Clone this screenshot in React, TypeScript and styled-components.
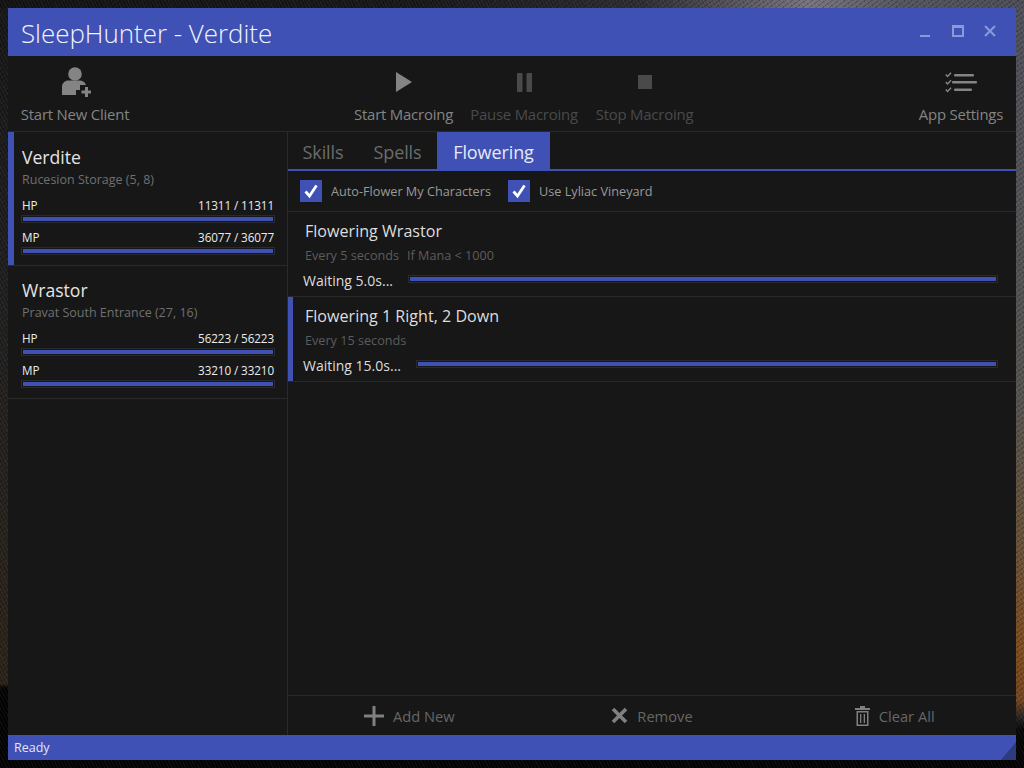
import React from "react";
import styled, { createGlobalStyle } from "styled-components";

const FONT = `"Open Sans", "Noto Sans", "Liberation Sans", sans-serif`;

const Global = createGlobalStyle`
  html, body { margin: 0; height: 100%; }
  body {
    background-color: #020202;
    background-image:
      repeating-linear-gradient(63deg, rgba(255,255,255,.05) 0 1px, transparent 1px 3px),
      repeating-linear-gradient(-37deg, rgba(0,0,0,.22) 0 1px, transparent 1px 4px),
      linear-gradient(90deg, #121212 0, #17171a 420px, #2c2c31 640px, #77747f 810px, #55555f 900px, #4c4c58 1024px),
      linear-gradient(180deg, #4f4f5a 0, #55534f 400px, #6a5034 560px, #7e4c1f 650px, #74461f 700px, #2c2623 716px, #060606 730px, #020202 768px),
      linear-gradient(180deg, #161616 0, #1f1f1f 300px, #2a2218 660px, #2a2218 684px, #020202 688px);
    background-size: 100% 100%, 100% 100%, 100% 8px, 8px 100%, 8px 100%;
    background-position: 0 0, 0 0, 0 0, right 0 top 0, 0 0;
    background-repeat: no-repeat;
    font-family: ${FONT};
    overflow: hidden;
  }
`;

const Desktop = styled.div`
  box-sizing: border-box;
  width: 1024px;
  height: 768px;
  padding: 8px;
`;

const Window = styled.div`
  height: 752px;
  display: flex;
  flex-direction: column;
  background: #171717;
`;

const TitleBar = styled.header`
  flex: 0 0 48px;
  display: flex;
  align-items: center;
  justify-content: space-between;
  background: #3f51b5;
`;

const Title = styled.h1`
  margin: 0 0 0 13px;
  padding-top: 2px;
  font-size: 25.9px;
  font-weight: 300;
  line-height: 46px;
  color: #f2f4fb;
`;

const WinControls = styled.div`
  display: flex;
  align-items: center;
  margin: 0 20px 2px 0;
  gap: 20px;
`;

const WinIcon = styled.svg`
  display: block;
  width: 12px;
  height: 12px;
  color: #8d98d9;
`;

const Toolbar = styled.nav`
  flex: 0 0 76px;
  box-sizing: border-box;
  display: flex;
  padding: 0 2px 0 4px;
  border-bottom: 1px solid #2a2a2a;
`;

const ToolButton = styled.div<{ $w: number; $dim?: boolean; $left?: string }>`
  flex: 0 0 ${(p) => p.$w}px;
  margin-left: ${(p) => p.$left ?? "0"};
  display: flex;
  flex-direction: column;
  align-items: center;
  color: ${(p) => (p.$dim ? "#4a4a4a" : "#848484")};
`;

const ToolIconBox = styled.div`
  height: 52px;
  display: flex;
  align-items: center;
  justify-content: center;
`;

const ToolLabel = styled.span`
  font-size: 14.9px;
  line-height: 20px;
  margin-top: -4px;
  white-space: nowrap;
  letter-spacing: -0.2px;
`;

const Main = styled.div`
  flex: 1;
  min-height: 0;
  display: flex;
`;

const Sidebar = styled.aside`
  flex: 0 0 280px;
  box-sizing: border-box;
  border-right: 1px solid #2a2a2a;
`;

const CharCard = styled.section<{ $selected?: boolean }>`
  box-sizing: border-box;
  height: ${(p) => (p.$selected ? 134 : 133)}px;
  padding: ${(p) => (p.$selected ? 13 : 12)}px 12px 0 14px;
  border-bottom: 1px solid #2a2a2a;
  box-shadow: ${(p) => (p.$selected ? "inset 6px 0 0 #3f51b5" : "none")};
`;

const CharName = styled.div`
  font-size: 17.6px;
  line-height: 24px;
  color: #e4e4e4;
`;

const CharPlace = styled.div`
  font-size: 12.5px;
  line-height: 18px;
  margin-top: 2px;
  color: #707070;
`;

const VitalStack = styled.div`
  display: flex;
  flex-direction: column;
  gap: 6px;
  margin: 8px 0 0 -1px;
`;

const VitalHead = styled.div`
  display: flex;
  justify-content: space-between;
  font-size: 11.7px;
  line-height: 16px;
  padding: 0 1px;
  color: #ececec;
  margin-bottom: 2px;
  letter-spacing: -0.1px;
`;

const Track = styled.div`
  box-sizing: border-box;
  height: 8px;
  padding: 1px;
  border: 1px solid #2a2a2a;
  background: #171717;
`;

const Fill = styled.div`
  height: 100%;
  background: #3f51b5;
`;

const Content = styled.main`
  flex: 1;
  min-width: 0;
  display: flex;
  flex-direction: column;
`;

const TabBar = styled.div`
  flex: 0 0 39px;
  box-sizing: border-box;
  display: flex;
  border-bottom: 2px solid #3f51b5;
`;

const Tab = styled.div<{ $active?: boolean; $w: number }>`
  flex: 0 0 ${(p) => p.$w}px;
  box-sizing: border-box;
  padding-top: 3px;
  text-align: center;
  font-size: 18px;
  line-height: 34px;
  letter-spacing: -0.1px;
  color: ${(p) => (p.$active ? "#e6e9f6" : "#6c6c6c")};
  background: ${(p) => (p.$active ? "#3f51b5" : "transparent")};
`;

const OptionsRow = styled.div`
  flex: 0 0 41px;
  box-sizing: border-box;
  display: flex;
  align-items: center;
  padding-left: 12px;
  border-bottom: 1px solid #2a2a2a;
`;

const CheckBox = styled.span`
  flex: 0 0 22px;
  height: 22px;
  display: flex;
  align-items: center;
  justify-content: center;
  background: #3f51b5;
`;

const CheckLabel = styled.span`
  margin: 0 17px 0 9px;
  font-size: 12.7px;
  color: #9a9a9a;
  white-space: nowrap;
`;

const TimerList = styled.div`
  flex: 1;
`;

const TimerRow = styled.article<{ $selected?: boolean }>`
  box-sizing: border-box;
  height: 85px;
  padding: 8px 18px 0 15px;
  border-bottom: 1px solid #2a2a2a;
  box-shadow: ${(p) => (p.$selected ? "inset 5px 0 0 #3f51b5" : "none")};
`;

const TimerTitle = styled.div`
  margin-left: 2px;
  font-size: 16.1px;
  line-height: 22px;
  color: #dedede;
`;

const TimerDetail = styled.div`
  display: flex;
  gap: 8px;
  margin: 4px 0 0 2px;
  font-size: 12.65px;
  line-height: 18px;
  color: #5c5c5c;
`;

const TimerStatus = styled.div`
  display: flex;
  align-items: center;
  margin-top: 7px;
  font-size: 14px;
  line-height: 20px;
  color: #dcdcdc;
`;

const StatusText = styled.span`
  margin-right: 15px;
  white-space: nowrap;
`;

const TimerBar = styled(Track)`
  flex: 1;
  margin-top: -4px;
`;

const BottomBar = styled.div`
  flex: 0 0 40px;
  display: grid;
  grid-template-columns: repeat(3, 1fr);
  border-top: 1px solid #2a2a2a;
  box-sizing: border-box;
`;

const BottomAction = styled.div`
  display: flex;
  align-items: center;
  justify-content: center;
  gap: 9px;
  font-size: 14.7px;
  color: #666666;
`;

const ActionIcon = styled.svg`
  display: block;
  color: #808080;
`;

const StatusBar = styled.footer`
  position: relative;
  flex: 0 0 25px;
  box-sizing: border-box;
  display: flex;
  align-items: center;
  padding: 1px 0 0 6px;
  background: #3f51b5;
  font-size: 12.5px;
  line-height: 24px;
  color: #e3e6f5;
`;

const Grip = styled.svg`
  position: absolute;
  right: 0;
  bottom: 0;
  width: 15px;
  height: 18px;
`;

const stats = [
  {
    name: "Verdite",
    place: "Rucesion Storage (5, 8)",
    hp: 11311,
    mp: 36077,
    selected: true,
  },
  {
    name: "Wrastor",
    place: "Pravat South Entrance (27, 16)",
    hp: 56223,
    mp: 33210,
    selected: false,
  },
];

const Check = () => (
  <svg width="16" height="16" viewBox="0 0 16 16">
    <path d="M2.5 8.5 6.5 13 13.5 2.5" fill="none" stroke="#fff" strokeWidth="2.8" />
  </svg>
);

const VitalBar = ({ label, value }: { label: string; value: number }) => (
  <div>
    <VitalHead>
      <span>{label}</span>
      <span>
        {value} / {value}
      </span>
    </VitalHead>
    <Track>
      <Fill />
    </Track>
  </div>
);

export default function App() {
  return (
    <>
      <Global />
      <Desktop>
        <Window>
          <TitleBar>
            <Title>SleepHunter - Verdite</Title>
            <WinControls>
              <WinIcon viewBox="0 0 12 12">
                <rect x="0" y="10" width="10" height="2" fill="currentColor" />
              </WinIcon>
              <WinIcon viewBox="0 0 12 12">
                <path d="M0 0h12v12H0z M2 3v7h8V3z" fill="currentColor" fillRule="evenodd" />
              </WinIcon>
              <WinIcon viewBox="0 0 12 12">
                <path d="M1 1l10 10M11 1 1 11" stroke="currentColor" strokeWidth="2" fill="none" />
              </WinIcon>
            </WinControls>
          </TitleBar>

          <Toolbar>
            <ToolButton $w={126}>
              <ToolIconBox>
                <svg width="32" height="30" viewBox="-3 0 32 30">
                  <circle cx="13" cy="7" r="6.8" fill="currentColor" />
                  <path
                    d="M0 28V20c0-4 3-6.500 6.500-6.500h11c3 0 5.500 1.500 6.500 4.500H18v5h-4v5z"
                    fill="currentColor"
                  />
                  <path d="M23 20h3v3.500h3.500v3H26V30h-3v-3.500h-3.500v-3H23z" fill="currentColor" />
                </svg>
              </ToolIconBox>
              <ToolLabel>Start New Client</ToolLabel>
            </ToolButton>
            <ToolButton $w={117} $left="207px">
              <ToolIconBox>
                <svg width="18" height="20" viewBox="0 0 18 20">
                  <path d="M1 0 17 10 1 20z" fill="currentColor" />
                </svg>
              </ToolIconBox>
              <ToolLabel>Start Macroing</ToolLabel>
            </ToolButton>
            <ToolButton $w={124} $dim>
              <ToolIconBox>
                <svg width="15" height="19" viewBox="0 0 15 19">
                  <rect x="0" y="0" width="5.500" height="19" rx="1" fill="currentColor" />
                  <rect x="9.500" y="0" width="5.500" height="19" rx="1" fill="currentColor" />
                </svg>
              </ToolIconBox>
              <ToolLabel>Pause Macroing</ToolLabel>
            </ToolButton>
            <ToolButton $w={117} $dim>
              <ToolIconBox>
                <svg width="14" height="14" viewBox="0 0 14 14">
                  <rect width="14" height="14" fill="currentColor" />
                </svg>
              </ToolIconBox>
              <ToolLabel>Stop Macroing</ToolLabel>
            </ToolButton>
            <ToolButton $w={106} $left="auto">
              <ToolIconBox>
                <svg width="32" height="21" viewBox="0 0 32 21">
                  <path
                    d="M.8 2.500 2.600 4.500 6 .8M.8 10 2.600 12 6 8.300M.8 17.500 2.600 19.500 6 15.800"
                    fill="none"
                    stroke="currentColor"
                    strokeWidth="1.500"
                  />
                  <rect x="9" y="2" width="20" height="2.500" rx="1" fill="currentColor" />
                  <rect x="7" y="9" width="25" height="2.500" rx="1" fill="currentColor" />
                  <rect x="9" y="16.500" width="18" height="2.500" rx="1" fill="currentColor" />
                </svg>
              </ToolIconBox>
              <ToolLabel>App Settings</ToolLabel>
            </ToolButton>
          </Toolbar>

          <Main>
            <Sidebar>
              {stats.map((c) => (
                <CharCard key={c.name} $selected={c.selected}>
                  <CharName>{c.name}</CharName>
                  <CharPlace>{c.place}</CharPlace>
                  <VitalStack>
                    <VitalBar label="HP" value={c.hp} />
                    <VitalBar label="MP" value={c.mp} />
                  </VitalStack>
                </CharCard>
              ))}
            </Sidebar>

            <Content>
              <TabBar>
                <Tab $w={70}>Skills</Tab>
                <Tab $w={79}>Spells</Tab>
                <Tab $w={113} $active>
                  Flowering
                </Tab>
              </TabBar>
              <OptionsRow>
                <CheckBox>
                  <Check />
                </CheckBox>
                <CheckLabel>Auto-Flower My Characters</CheckLabel>
                <CheckBox>
                  <Check />
                </CheckBox>
                <CheckLabel>Use Lyliac Vineyard</CheckLabel>
              </OptionsRow>
              <TimerList>
                <TimerRow>
                  <TimerTitle>Flowering Wrastor</TimerTitle>
                  <TimerDetail>
                    <span>Every 5 seconds</span>
                    <span>If Mana &lt; 1000</span>
                  </TimerDetail>
                  <TimerStatus>
                    <StatusText>Waiting 5.0s...</StatusText>
                    <TimerBar>
                      <Fill />
                    </TimerBar>
                  </TimerStatus>
                </TimerRow>
                <TimerRow $selected>
                  <TimerTitle>Flowering 1 Right, 2 Down</TimerTitle>
                  <TimerDetail>
                    <span>Every 15 seconds</span>
                  </TimerDetail>
                  <TimerStatus>
                    <StatusText>Waiting 15.0s...</StatusText>
                    <TimerBar>
                      <Fill />
                    </TimerBar>
                  </TimerStatus>
                </TimerRow>
              </TimerList>
              <BottomBar>
                <BottomAction>
                  <ActionIcon width="20" height="20" viewBox="0 0 20 20">
                    <path d="M8.500 0h3v8.500H20v3h-8.500V20h-3v-8.500H0v-3h8.500z" fill="currentColor" />
                  </ActionIcon>
                  <span>Add New</span>
                </BottomAction>
                <BottomAction>
                  <ActionIcon width="17" height="17" viewBox="0 0 17 17">
                    <path d="M2 2l13 13M15 2 2 15" stroke="currentColor" strokeWidth="3.600" fill="none" />
                  </ActionIcon>
                  <span>Remove</span>
                </BottomAction>
                <BottomAction>
                  <ActionIcon width="15" height="20" viewBox="0 0 15 20">
                    <path
                      d="M5 0h5v2h5v2H0V2h5zM1.500 5h12v15h-12zM3 6.500v12h9v-12zM5 8h1.300v9H5zM8.700 8H10v9H8.700z"
                      fill="currentColor"
                      fillRule="evenodd"
                    />
                  </ActionIcon>
                  <span>Clear All</span>
                </BottomAction>
              </BottomBar>
            </Content>
          </Main>

          <StatusBar>
            Ready
            <Grip viewBox="0 0 15 18">
              <path d="M15 0V18H0z" fill="#2f3b80" />
            </Grip>
          </StatusBar>
        </Window>
      </Desktop>
    </>
  );
}
